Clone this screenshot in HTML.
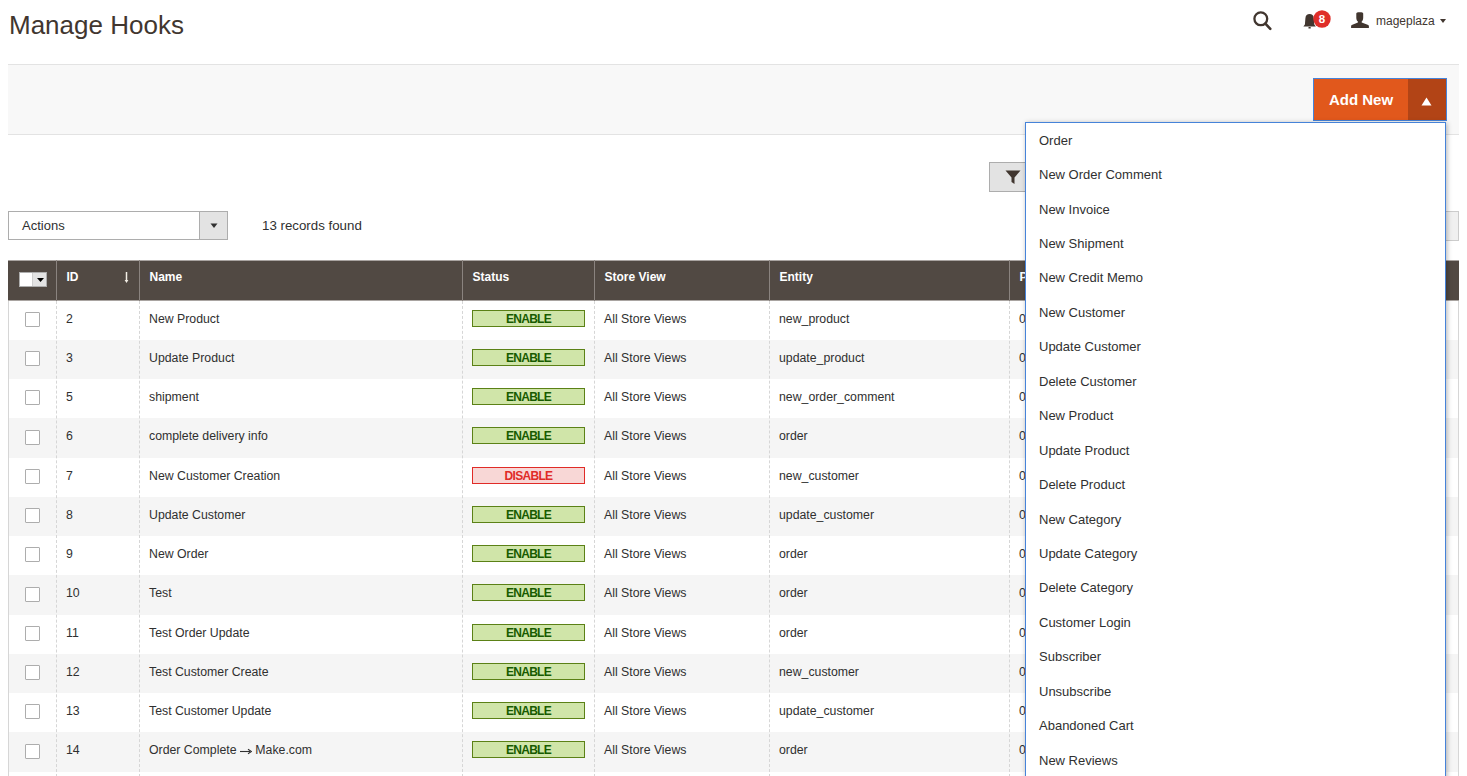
<!DOCTYPE html>
<html><head><meta charset="utf-8">
<style>
*{box-sizing:border-box;margin:0;padding:0}
html,body{width:1467px;height:776px;overflow:hidden;background:#fff}
body{font-family:"Liberation Sans",sans-serif;color:#303030;position:relative}
.a{position:absolute}
.title{left:9px;top:10px;font-size:26px;line-height:30px;color:#41362f;white-space:nowrap}
.panel{left:8px;top:64px;width:1451px;height:71px;background:#f8f8f8;border-top:1px solid #e3e3e3;border-bottom:1px solid #e3e3e3}
.btn{left:1313px;top:78px;width:134px;height:43px;border:1px solid #4683d9;background:#e1581c}
.btn .lbl{position:absolute;left:0;top:0;width:94px;height:41px;line-height:41px;text-align:center;color:#fff;font-weight:bold;font-size:15px}
.btn .tog{position:absolute;left:94px;top:0;width:38px;height:41px;background:#b24416}
.sel{left:8px;top:211px;width:220px;height:29px;border:1px solid #adadad;background:#fff}
.sel .t{position:absolute;left:13px;top:0;line-height:27px;font-size:13px;color:#303030}
.sel .b{position:absolute;right:0;top:0;width:28px;height:27px;background:#e3e3e3;border-left:1px solid #adadad}
.recs{left:262px;top:211px;line-height:29px;font-size:13.3px;color:#303030}
.filt{left:989px;top:162px;width:60px;height:30px;background:#e3e3e3;border:1px solid #adadad}
.rbox{left:1440px;top:211px;width:19px;height:30px;background:#f0f0f0;border:1px solid #cccccc}
.thead{left:8px;top:260px;width:1451px;height:41px;background:#514943;border-top:1px solid #a9a4a1;border-bottom:1px solid #a9a4a1}
.th{position:absolute;top:-1px;height:41px;line-height:34px;color:#fff;font-weight:bold;font-size:12px;padding-left:9.5px;border-left:1px solid #8a837f;white-space:nowrap}
.tbody{left:8px;top:300.6px;width:1451px;height:476px;border-left:1px solid #d6d6d6;border-right:1px solid #d6d6d6}
.tr{position:absolute;left:0;width:1449px}
.tr.g{background:#f5f5f5}
.td{position:absolute;top:0;line-height:37px;font-size:12.3px;padding-left:9px;white-space:nowrap}
.vl{position:absolute;top:0;height:476px;border-left:1px dashed #d6d6d6}
.cb{position:absolute;left:16px;top:11.4px;width:15px;height:15px;border:1px solid #adadad;background:#fff;border-radius:1px}
.badge{position:absolute;left:463px;top:9px;width:113px;height:17px;border:1px solid #5b8116;background:#d0e5a9;color:#185b00;font-weight:bold;font-size:12px;letter-spacing:-0.7px;line-height:16.5px;text-align:center}
.badge.dis{border-color:#e02b27;background:#f8d7d6;color:#e02b27}
.menu{left:1025px;top:122px;width:421px;height:700px;background:#fff;border:1px solid #4683d9;box-shadow:1px 1px 5px rgba(0,0,0,.3)}
.mi{position:absolute;left:13px;font-size:13px;line-height:20px;color:#303030;white-space:nowrap}
</style></head><body>
<div class="a title">Manage Hooks</div>
<svg class="a" style="left:1250px;top:10px" width="26" height="24" viewBox="0 0 26 24">
  <circle cx="10.8" cy="8.8" r="6.4" fill="none" stroke="#41362f" stroke-width="2.3"/>
  <line x1="15.4" y1="13.6" x2="20.3" y2="18.8" stroke="#41362f" stroke-width="2.6" stroke-linecap="round"/>
</svg>
<svg class="a" style="left:1300px;top:8px" width="34" height="24" viewBox="0 0 34 24">
  <path d="M3.4 18.5 L4.9 16.6 L5.4 10.2 C5.6 7.2 7.2 5.9 9.6 5.9 C12 5.9 13.6 7.2 13.8 10.2 L14.3 16.6 L15.8 18.5 Z" fill="#41362f"/>
  <rect x="8.4" y="19" width="2.4" height="1.6" rx="0.6" fill="#41362f"/>
  <circle cx="22" cy="11" r="8.7" fill="#df2e29"/>
  <text x="22" y="15" font-family="Liberation Sans" font-weight="bold" font-size="11.5" fill="#fff" text-anchor="middle">8</text>
</svg>
<svg class="a" style="left:1350px;top:11px" width="20" height="18" viewBox="0 0 20 18">
  <path d="M6.3 2.6 C6.3 1.5 7.5 1.2 9.8 1.2 C12.1 1.2 13.2 1.5 13.2 2.6 L13.2 6.8 C13.2 8.8 12.4 10 11.7 10.6 L11.7 11.6 L17.6 13.7 C18.4 14 18.9 14.5 18.9 15.3 L18.9 16.9 L1.1 16.9 L1.1 15.3 C1.1 14.5 1.6 14 2.4 13.7 L7.9 11.6 L7.9 10.6 C7.1 10 6.3 8.8 6.3 6.8 Z" fill="#41362f"/>
</svg>
<div class="a" style="left:1376px;top:12px;font-size:12px;line-height:18px;color:#41362f">mageplaza</div>
<svg class="a" style="left:1439px;top:18px" width="8" height="6" viewBox="0 0 8 6"><path d="M1 1 L7 1 L4 5 Z" fill="#41362f"/></svg>
<div class="a panel"></div>
<div class="a btn"><div class="lbl">Add New</div><div class="tog"><svg style="position:absolute;left:13px;top:18px" width="11" height="9" viewBox="0 0 11 9"><path d="M0.5 8.5 L5.5 0.5 L10.5 8.5 Z" fill="#fff"/></svg></div></div>
<div class="a filt"><svg style="position:absolute;left:15px;top:7px" width="16" height="15" viewBox="0 0 16 15"><path d="M0.5 0.5 L15.5 0.5 L9.5 7.5 L9.5 14 L6.5 12 L6.5 7.5 Z" fill="#41362f"/></svg></div>
<div class="a rbox"></div>
<div class="a sel"><div class="t">Actions</div><div class="b"><svg style="position:absolute;left:10px;top:11px" width="8" height="6" viewBox="0 0 8 6"><path d="M0.5 0.5 L7.5 0.5 L4 5 Z" fill="#303030"/></svg></div></div>
<div class="a recs">13 records found</div>
<div class="a thead">
  <div class="a" style="left:11px;top:11px;width:28px;height:15px;border:1px solid #adadad;background:#fff"><div style="position:absolute;left:12px;top:0;width:14px;height:13px;background:#e3e3e3;border-left:1px solid #cfcfcf"></div><svg style="position:absolute;left:16.5px;top:5px" width="7" height="5" viewBox="0 0 7 5"><path d="M0 0 L7 0 L3.5 4 Z" fill="#000"/></svg></div>
  <div class="th" style="left:48px;width:83px">ID</div>
  <svg class="a" style="left:116px;top:11px" width="5" height="12" viewBox="0 0 5 12"><path d="M2.5 0 L2.5 9" stroke="#f3efe6" stroke-width="1.5"/><path d="M0.6 8 L4.4 8 L2.5 11 Z" fill="#f3efe6"/></svg>
  <div class="th" style="left:131px;width:323px">Name</div>
  <div class="th" style="left:454px;width:132px">Status</div>
  <div class="th" style="left:586px;width:175px">Store View</div>
  <div class="th" style="left:761px;width:240px">Entity</div>
  <div class="th" style="left:1001px;width:450px">P</div>
</div>
<div class="a tbody"><div class="tr" style="top:0.0px;height:39.25px"><div class="cb"></div><div class="td" style="left:48px">2</div><div class="td" style="left:131px">New Product</div><div class="badge">ENABLE</div><div class="td" style="left:586px">All Store Views</div><div class="td" style="left:761px">new_product</div><div class="td" style="left:1001px">0</div></div><div class="tr g" style="top:39.25px;height:39.25px"><div class="cb"></div><div class="td" style="left:48px">3</div><div class="td" style="left:131px">Update Product</div><div class="badge">ENABLE</div><div class="td" style="left:586px">All Store Views</div><div class="td" style="left:761px">update_product</div><div class="td" style="left:1001px">0</div></div><div class="tr" style="top:78.5px;height:39.25px"><div class="cb"></div><div class="td" style="left:48px">5</div><div class="td" style="left:131px">shipment</div><div class="badge">ENABLE</div><div class="td" style="left:586px">All Store Views</div><div class="td" style="left:761px">new_order_comment</div><div class="td" style="left:1001px">0</div></div><div class="tr g" style="top:117.75px;height:39.25px"><div class="cb"></div><div class="td" style="left:48px">6</div><div class="td" style="left:131px">complete delivery info</div><div class="badge">ENABLE</div><div class="td" style="left:586px">All Store Views</div><div class="td" style="left:761px">order</div><div class="td" style="left:1001px">0</div></div><div class="tr" style="top:157.0px;height:39.25px"><div class="cb"></div><div class="td" style="left:48px">7</div><div class="td" style="left:131px">New Customer Creation</div><div class="badge dis">DISABLE</div><div class="td" style="left:586px">All Store Views</div><div class="td" style="left:761px">new_customer</div><div class="td" style="left:1001px">0</div></div><div class="tr g" style="top:196.25px;height:39.25px"><div class="cb"></div><div class="td" style="left:48px">8</div><div class="td" style="left:131px">Update Customer</div><div class="badge">ENABLE</div><div class="td" style="left:586px">All Store Views</div><div class="td" style="left:761px">update_customer</div><div class="td" style="left:1001px">0</div></div><div class="tr" style="top:235.5px;height:39.25px"><div class="cb"></div><div class="td" style="left:48px">9</div><div class="td" style="left:131px">New Order</div><div class="badge">ENABLE</div><div class="td" style="left:586px">All Store Views</div><div class="td" style="left:761px">order</div><div class="td" style="left:1001px">0</div></div><div class="tr g" style="top:274.75px;height:39.25px"><div class="cb"></div><div class="td" style="left:48px">10</div><div class="td" style="left:131px">Test</div><div class="badge">ENABLE</div><div class="td" style="left:586px">All Store Views</div><div class="td" style="left:761px">order</div><div class="td" style="left:1001px">0</div></div><div class="tr" style="top:314.0px;height:39.25px"><div class="cb"></div><div class="td" style="left:48px">11</div><div class="td" style="left:131px">Test Order Update</div><div class="badge">ENABLE</div><div class="td" style="left:586px">All Store Views</div><div class="td" style="left:761px">order</div><div class="td" style="left:1001px">0</div></div><div class="tr g" style="top:353.25px;height:39.25px"><div class="cb"></div><div class="td" style="left:48px">12</div><div class="td" style="left:131px">Test Customer Create</div><div class="badge">ENABLE</div><div class="td" style="left:586px">All Store Views</div><div class="td" style="left:761px">new_customer</div><div class="td" style="left:1001px">0</div></div><div class="tr" style="top:392.5px;height:39.25px"><div class="cb"></div><div class="td" style="left:48px">13</div><div class="td" style="left:131px">Test Customer Update</div><div class="badge">ENABLE</div><div class="td" style="left:586px">All Store Views</div><div class="td" style="left:761px">update_customer</div><div class="td" style="left:1001px">0</div></div><div class="tr g" style="top:431.75px;height:39.25px"><div class="cb"></div><div class="td" style="left:48px">14</div><div class="td" style="left:131px">Order Complete <svg width="12" height="8" viewBox="0 0 12 8" style="vertical-align:-1px"><path d="M0 4.5 L10 4.5" stroke="#303030" stroke-width="1.1"/><path d="M8 2.3 L11.5 4.5 L8 6.7" fill="none" stroke="#303030" stroke-width="1.1"/></svg> Make.com</div><div class="badge">ENABLE</div><div class="td" style="left:586px">All Store Views</div><div class="td" style="left:761px">order</div><div class="td" style="left:1001px">0</div></div><div class="tr" style="top:471.0px;height:39.25px"></div><div class="vl" style="left:47px"></div><div class="vl" style="left:130px"></div><div class="vl" style="left:453px"></div><div class="vl" style="left:585px"></div><div class="vl" style="left:760px"></div><div class="vl" style="left:1000px"></div></div>
<div class="a menu"><div class="mi" style="top:7.70px">Order</div><div class="mi" style="top:42.14px">New Order Comment</div><div class="mi" style="top:76.58px">New Invoice</div><div class="mi" style="top:111.02px">New Shipment</div><div class="mi" style="top:145.46px">New Credit Memo</div><div class="mi" style="top:179.90px">New Customer</div><div class="mi" style="top:214.34px">Update Customer</div><div class="mi" style="top:248.78px">Delete Customer</div><div class="mi" style="top:283.22px">New Product</div><div class="mi" style="top:317.66px">Update Product</div><div class="mi" style="top:352.10px">Delete Product</div><div class="mi" style="top:386.54px">New Category</div><div class="mi" style="top:420.98px">Update Category</div><div class="mi" style="top:455.42px">Delete Category</div><div class="mi" style="top:489.86px">Customer Login</div><div class="mi" style="top:524.30px">Subscriber</div><div class="mi" style="top:558.74px">Unsubscribe</div><div class="mi" style="top:593.18px">Abandoned Cart</div><div class="mi" style="top:627.62px">New Reviews</div></div>
</body></html>
